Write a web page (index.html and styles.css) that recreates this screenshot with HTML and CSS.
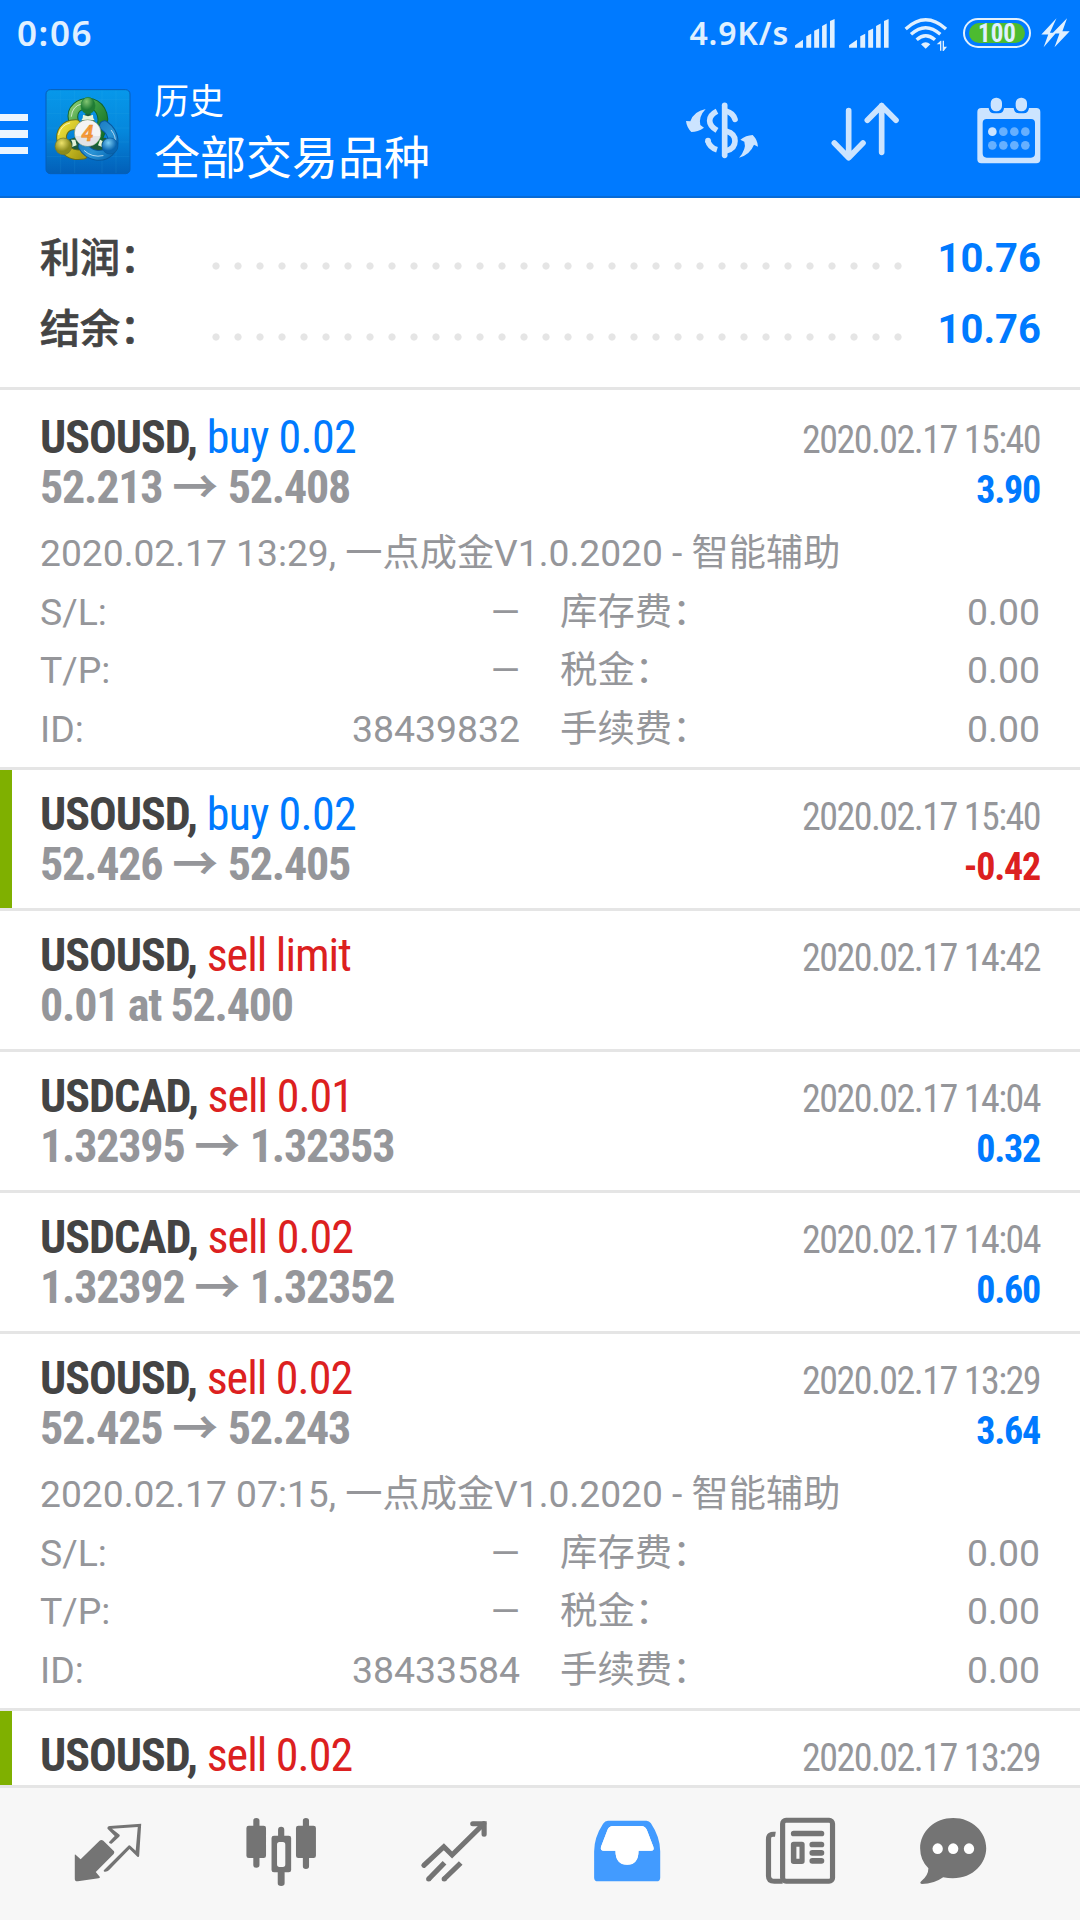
FILE: index.html
```html
<!DOCTYPE html>
<html lang="zh-CN">
<head>
<meta charset="utf-8">
<title>历史</title>
<link rel="stylesheet" href="styles.css">
</head>
<body>
<div class="screen">
  <header class="header">
    <div class="status">
      <span class="clock">0:06</span>
      <span class="speed">4.9K/s</span>
      <svg class="signal" viewBox="405 54 121 88"><path d="M405 141V134L429 117V141ZM439 141V106L454 99V141ZM463 141V90L478 83V141ZM487 141V75L501 68V141ZM511 141V60L525 54V141Z"/></svg>
      <svg class="signal signal-2" viewBox="405 54 121 88"><path d="M405 141V134L429 117V141ZM439 141V106L454 99V141ZM463 141V90L478 83V141ZM487 141V75L501 68V141ZM511 141V60L525 54V141Z"/></svg>
      <svg class="wifi" viewBox="733 51 132 105"><g fill="none" stroke="#e0f0ff" stroke-width="10"><path d="M738 87Q798 32 859 87"/><path d="M754 103Q798 63 842 103"/><path d="M771 119Q798 95 826 119"/></g><path d="M784 133Q798 120 812 133L798 146ZM841 152V133H831L843 122H845V152ZM849 122H853V140H862L852 153H849Z"/></svg>
      <div class="battery"><div class="battery-fill">100</div></div>
      <svg class="bolt" viewBox="1143 54 88 91"><path d="M1190 55L1144 104H1165L1151 143L1189 99H1170ZM1222 55L1177 101H1199L1184 143L1230 94H1208Z"/></svg>
    </div>
    <div class="appbar">
      <div class="menu"><i></i><i></i><i></i></div>
      <svg class="logo" viewBox="132 262 264 264">
        <defs>
          <linearGradient id="sky" x1="0" y1="0" x2="0" y2="1"><stop offset="0" stop-color="#0798ea"/><stop offset=".5" stop-color="#0587dc"/><stop offset="1" stop-color="#025fb8"/></linearGradient>
          <linearGradient id="green" x1="0" y1="0" x2="1" y2="1"><stop offset="0" stop-color="#8ccb72"/><stop offset=".4" stop-color="#3b9b42"/><stop offset="1" stop-color="#126d26"/></linearGradient>
          <linearGradient id="gold" x1="0" y1="0" x2="1" y2="1"><stop offset="0" stop-color="#eedf38"/><stop offset="1" stop-color="#a69b13"/></linearGradient>
          <linearGradient id="azure" x1="0" y1="0" x2="1" y2="1"><stop offset="0" stop-color="#1671b8"/><stop offset=".6" stop-color="#2a93d5"/><stop offset="1" stop-color="#076ab5"/></linearGradient>
          <radialGradient id="greenBall" cx=".4" cy=".25"><stop offset="0" stop-color="#83c673"/><stop offset="1" stop-color="#207c35"/></radialGradient>
          <radialGradient id="goldBall" cx=".4" cy=".3"><stop offset="0" stop-color="#eee36c"/><stop offset="1" stop-color="#8c8b1d"/></radialGradient>
          <radialGradient id="blueBall" cx=".4" cy=".3"><stop offset="0" stop-color="#7bcef5"/><stop offset="1" stop-color="#0965b0"/></radialGradient>
        </defs>
        <rect x="138" y="270" width="252" height="252" rx="13" fill="url(#sky)" stroke="#075eb5" stroke-width="3"/>
        <path d="M182 272V520M224 272V520M306 272V520M348 272V520M140 300H388M140 342H388M140 385H388M140 427H388M140 470H388" stroke="#48b8f2" stroke-opacity=".18" stroke-width="2"/>
        <path d="M264 330L305 400H223ZM205 420L262 400V462H220ZM262 410L320 415L310 460L262 445Z" fill="#1c5c3c"/>
        <g fill="none" stroke-linecap="round" stroke-linejoin="round">
          <path d="M220 362C212 326 242 311 264 311C294 311 320 343 303 388Q299 408 286 421" stroke="#12652c" stroke-width="32"/>
          <path d="M220 362C212 326 242 311 264 311C294 311 320 343 303 388Q299 408 286 421" stroke="url(#green)" stroke-width="26"/>
          <path d="M228 375C194 374 180 400 186 424C192 453 214 470 249 464" stroke="#666e1a" stroke-width="32"/>
          <path d="M228 375C194 374 180 400 186 424C192 453 214 470 249 464" stroke="url(#gold)" stroke-width="26"/>
          <path d="M313 378C345 401 346 438 327 456C305 476 266 468 250 440" stroke="#07589f" stroke-width="32"/>
          <path d="M313 378C345 401 346 438 327 456C305 476 266 468 250 440" stroke="url(#azure)" stroke-width="26"/>
          <path d="M214 350Q217 319 244 313M176 405Q182 376 209 370M253 453Q276 475 309 468M334 392Q350 412 345 430" stroke="#fff" stroke-opacity=".65" stroke-width="3"/>
        </g>
        <path d="M249 345Q250 354 244 362H284Q278 354 279 345L264 350ZM213 420Q220 430 216 442L230 437L226 420ZM300 420L308 424Q302 434 306 442L294 437Z" fill="#e4f2d8"/>
        <ellipse cx="264" cy="318" rx="21" ry="25" fill="url(#greenBall)" stroke="#187b34" stroke-width="2"/>
        <circle cx="190" cy="440" r="25" fill="url(#goldBall)" stroke="#75782b" stroke-width="2"/>
        <circle cx="330" cy="439" r="24" fill="url(#blueBall)" stroke="#07599d" stroke-width="2"/>
        <circle cx="263" cy="400" r="40" fill="#f4f4f4" stroke="#5b7f55" stroke-width="1.500"/><path d="M225 409A39 39 0 0 0 301 409Z" fill="#d9dadf" fill-opacity=".65"/>
        <text class="logo-digit" x="262" y="424" text-anchor="middle">4</text>
      </svg>
      <div class="titles"><div class="title">历史</div><div class="subtitle">全部交易品种</div></div>
      <div class="actions">
        <svg viewBox="66 285 240 210"><g fill="none" stroke-width="17"><path d="M194 316V466" stroke-linecap="round"/><path d="M171 334Q149 345 149 362Q149 378 171 391"/><path d="M143 421Q148 442 171 449" /><path d="M199 334Q219 339 225 358" stroke-linecap="round"/><path d="M199 394Q225 401 225 423Q225 446 199 452"/></g><circle cx="144" cy="422" r="8.500"/><path d="M137 327Q101 334 91 364L78 363Q80 382 94 396Q113 396 132 383L121 375Q115 350 137 327ZM237 473Q270 464 282 434L294 440Q293 420 278 405Q258 406 241 419L253 425Q260 447 237 473Z"/></svg>
        <svg viewBox="498 285 240 210"><path d="M566 332V472M523 429L566 473L609 429M665 457V317M622 361L665 317L708 361" fill="none" stroke-width="17" stroke-linecap="round" stroke-linejoin="round"/></svg>
        <svg viewBox="926 285 240 210"><path fill-rule="evenodd" d="M963 324H985Q987 340 1001 340H1015Q1030 340 1031 324H1060Q1062 340 1076 340H1090Q1104 340 1106 324H1128Q1140 324 1140 336V478Q1140 490 1128 490H963Q951 490 951 478V336Q951 324 963 324ZM979 357Q967 357 967 369V460Q967 473 979 473H1112Q1124 473 1124 460V369Q1124 357 1112 357Z"/><rect x="991" y="293" width="34" height="41" rx="16"/><rect x="1066" y="293" width="34" height="41" rx="16"/><circle cx="996" cy="395" r="13"/><g fill="#66b0ff"><circle cx="1029" cy="395" r="13"/><circle cx="1062" cy="395" r="13"/><circle cx="1095" cy="395" r="13"/><circle cx="996" cy="436" r="13"/><circle cx="1029" cy="436" r="13"/><circle cx="1062" cy="436" r="13"/><circle cx="1095" cy="436" r="13"/></g></svg>
      </div>
    </div>
  </header>

  <section class="summary">
    <div class="sum-row"><span class="sum-label">利润：</span><span class="dots"></span><span class="sum-value">10.76</span></div>
    <div class="sum-row"><span class="sum-label">结余：</span><span class="dots"></span><span class="sum-value">10.76</span></div>
  </section>

  <main class="deals">
    <article class="deal first">
      <div class="line"><span class="sym"><b>USOUSD,</b> <span class="buy">buy 0.02</span></span><span class="time">2020.02.17 15:40</span></div>
      <div class="line"><span class="price">52.213 <span class="arrow">→</span> 52.408</span><span class="profit buy">3.90</span></div>
      <div class="details">
        <div class="comment">2020.02.17 13:29, 一点成金V1.0.2020 - 智能辅助</div>
        <div class="pair"><span>S/L:</span><span class="dash">—</span></div><div class="pair"><span>库存费：</span><span>0.00</span></div>
        <div class="pair"><span>T/P:</span><span class="dash">—</span></div><div class="pair"><span>税金：</span><span>0.00</span></div>
        <div class="pair"><span>ID:</span><span>38439832</span></div><div class="pair"><span>手续费：</span><span>0.00</span></div>
      </div>
    </article>
    <article class="deal marked">
      <div class="line"><span class="sym"><b>USOUSD,</b> <span class="buy">buy 0.02</span></span><span class="time">2020.02.17 15:40</span></div>
      <div class="line"><span class="price">52.426 <span class="arrow">→</span> 52.405</span><span class="profit sell">-0.42</span></div>
    </article>
    <article class="deal">
      <div class="line"><span class="sym"><b>USOUSD,</b> <span class="sell">sell limit</span></span><span class="time">2020.02.17 14:42</span></div>
      <div class="line"><span class="price">0.01 at 52.400</span></div>
    </article>
    <article class="deal">
      <div class="line"><span class="sym"><b>USDCAD,</b> <span class="sell">sell 0.01</span></span><span class="time">2020.02.17 14:04</span></div>
      <div class="line"><span class="price">1.32395 <span class="arrow">→</span> 1.32353</span><span class="profit buy">0.32</span></div>
    </article>
    <article class="deal">
      <div class="line"><span class="sym"><b>USDCAD,</b> <span class="sell">sell 0.02</span></span><span class="time">2020.02.17 14:04</span></div>
      <div class="line"><span class="price">1.32392 <span class="arrow">→</span> 1.32352</span><span class="profit buy">0.60</span></div>
    </article>
    <article class="deal">
      <div class="line"><span class="sym"><b>USOUSD,</b> <span class="sell">sell 0.02</span></span><span class="time">2020.02.17 13:29</span></div>
      <div class="line"><span class="price">52.425 <span class="arrow">→</span> 52.243</span><span class="profit buy">3.64</span></div>
      <div class="details">
        <div class="comment">2020.02.17 07:15, 一点成金V1.0.2020 - 智能辅助</div>
        <div class="pair"><span>S/L:</span><span class="dash">—</span></div><div class="pair"><span>库存费：</span><span>0.00</span></div>
        <div class="pair"><span>T/P:</span><span class="dash">—</span></div><div class="pair"><span>税金：</span><span>0.00</span></div>
        <div class="pair"><span>ID:</span><span>38433584</span></div><div class="pair"><span>手续费：</span><span>0.00</span></div>
      </div>
    </article>
    <article class="deal marked">
      <div class="line"><span class="sym"><b>USOUSD,</b> <span class="sell">sell 0.02</span></span><span class="time">2020.02.17 13:29</span></div>
    </article>
  </main>

  <nav class="tabs">
    <svg viewBox="208 381 215 222" preserveAspectRatio="none"><path d="M219 494Q221 493 223 496L236 508L291 452Q296 448 302 452L333 484Q335 488 332 492L280 546L292 561Q293 564 288 565L228 574Q219 575 219 566Z"/><path fill-rule="evenodd" d="M412 401L406 498Q405 502 401 500L378 477L318 541Q313 546 305 545Q301 544 304 540L374 468Q377 464 381 468L396 482L402 411L327 416L349 434Q351 437 348 440L326 461Q320 462 318 457L335 438L314 416Q313 409 321 408Z"/></svg>
    <svg viewBox="708 381 215 222" preserveAspectRatio="none"><path fill-rule="evenodd" d="M735 392Q735 384 744 384Q753 384 753 392V407H765Q772 407 772 414V497Q772 504 765 504H753V525Q753 533 744 533Q735 533 735 525V504H722Q715 504 715 497V414Q715 407 722 407H735ZM807 419Q807 410 816 410Q825 410 825 419V437H838Q845 437 845 444V540Q845 547 838 547H826V580Q826 588 816 588Q806 588 806 580V547H795Q788 547 788 540V444Q788 437 795 437H807ZM811 456Q804 456 804 464V523Q804 531 811 531H821Q828 531 828 523V464Q828 456 821 456ZM879 392Q879 384 888 384Q897 384 897 392V407H910Q917 407 917 414V497Q917 504 910 504H897V529Q897 537 888 537Q879 537 879 529V504H866Q859 504 859 497V414Q859 407 866 407H879Z"/></svg>
    <svg viewBox="1211 381 215 222" preserveAspectRatio="none"><g class="outline" stroke-width="15"><path d="M1231 526L1289 470L1313 495L1405 401" stroke-linecap="round"/><path d="M1373 401H1406V433" stroke-linecap="round"/><path d="M1245 567L1291 518M1290 567L1338 519" /></g><circle cx="1245" cy="567" r="7.500"/><circle cx="1290" cy="567" r="7.500"/></svg>
    <svg class="active" viewBox="146 381 215 222" preserveAspectRatio="none"><path fill-rule="evenodd" d="M198 392H310Q318 392 323 400Q350 442 350 484V563Q350 574 339 574H169Q158 574 158 563V484Q158 442 184 401Q190 392 198 392ZM212 408Q202 408 197 419L178 470Q175 482 186 482H220Q220 524 254 524Q287 524 287 482H323Q334 482 330 470L311 419Q305 408 296 408Z"/><path fill="#fff" d="M212 408Q202 408 197 419L178 470Q175 482 186 482H220Q220 524 254 524Q287 524 287 482H323Q334 482 330 470L311 419Q305 408 296 408Z"/></svg>
    <svg viewBox="649 381 215 222" preserveAspectRatio="none"><g class="outline" stroke-width="15"><rect x="706" y="391" width="145" height="183" rx="10"/><path d="M685 433Q665 430 665 447V558Q665 574 682 574H706"/></g><rect x="730" y="422" width="97" height="17" rx="8"/><path fill-rule="evenodd" d="M738 455H762Q770 455 770 463V514Q770 522 762 522H738Q730 522 730 514V463Q730 455 738 455ZM746 470V506H755V470Z"/><rect x="784" y="455" width="43" height="17" rx="8"/><rect x="784" y="480" width="43" height="17" rx="8"/><rect x="784" y="504" width="43" height="17" rx="8"/></svg>
    <svg viewBox="1091 381 215 222" preserveAspectRatio="none"><path d="M1199 384C1254 384 1295 425 1295 475C1295 526 1247 578 1170 562Q1143 582 1108 582Q1100 580 1106 574Q1127 557 1127 535Q1103 511 1103 475C1103 424 1146 384 1199 384Z"/><g fill="#fff"><ellipse cx="1154" cy="476" rx="15" ry="16"/><ellipse cx="1199" cy="476" rx="15" ry="16"/><ellipse cx="1245" cy="476" rx="15" ry="16"/></g></svg>
  </nav>
</div>
</body>
</html>
```
FILE: styles.css
```css
* { box-sizing: border-box; }
body { margin: 0; font-family: Roboto, "Noto Sans CJK SC", sans-serif; }
.screen { width: 1080px; height: 1920px; display: flex; flex-direction: column; background: #fff; overflow: hidden; }

.header { height: 198px; flex: none; background: #007aff; border-bottom: 2px solid #086bd6; color: #fff; }
.status { height: 66px; padding: 0 10px 0 17px; display: flex; align-items: center; color: #e0f0ff; fill: #e0f0ff; font-family: "Noto Sans", sans-serif; font-weight: 600; }
.clock { font-size: 35px; line-height: 66px; letter-spacing: 1.6px; }
.speed { margin-left: auto; font-size: 32px; line-height: 66px; letter-spacing: .8px; }
.signal { width: 40px; height: 29px; margin-left: 6px; }
.signal-2 { margin-left: 14px; }
.wifi { width: 44px; height: 35px; margin: 3px 0 0 15px; }
.battery { width: 68px; height: 30px; margin-left: 15px; padding: 3px 4px; border: 2px solid #e0f0ff; border-radius: 15px; }
.battery-fill { height: 20px; border-radius: 10px; background: #4cbb30; font-family: Roboto, sans-serif; font-size: 25px; line-height: 21px; font-weight: 700; text-align: center; font-stretch: 80%; }
.bolt { width: 29px; height: 30px; margin-left: 10px; }

.appbar { height: 130px; display: flex; align-items: center; padding-right: 31px; }
.menu { width: 28px; display: flex; flex-direction: column; gap: 9px; margin-top: 6px; }
.menu i { height: 7.500px; background: #ebf5ff; }
.logo { width: 88px; height: 88px; margin: 0 0 0 16px; }
.logo-digit { font: italic 700 66px Roboto, sans-serif; fill: #f79a38; stroke: #dd8527; stroke-width: 1; }
.titles { margin-left: 22px; height: 130px; padding-top: 11px; }
.title { font-size: 35px; line-height: 52px; }
.subtitle { font-size: 46px; line-height: 58px; }
.actions { margin-left: auto; display: flex; gap: 63.500px; fill: #cce4ff; stroke: none; }
.actions svg { width: 80px; height: 70px; margin-top: -3px; }
.actions path[stroke-width], .actions g[stroke-width] { stroke: #cce4ff; }

.summary { height: 192px; flex: none; padding: 25px 40px 0; border-bottom: 3px solid #e5e5e5; font-size: 40px; font-weight: 500; color: #444; }
.sum-row { height: 71px; line-height: 71px; display: flex; align-items: center; }
.sum-label { width: 165px; -webkit-text-stroke: .7px #444; }
.dots { width: 704px; height: 8px; margin-top: 14px; background: radial-gradient(circle at 11px 4px, #e5e5e5 3.200px, transparent 4px) 0 0 / 22px 8px repeat-x; }
.sum-value { margin: 0 -1px 0 auto; color: #007aff; font-weight: 700; }

.deals { flex: 1; min-height: 0; overflow: hidden; }
.deal { padding: 19px 40px 0; min-height: 141px; border-bottom: 3px solid #e5e5e5; color: #95969a; }
.first { padding-top: 22px; }
.marked { box-shadow: inset 12px 0 #7fb000; }
.line { height: 50px; line-height: 50px; display: flex; justify-content: space-between; font-family: "Roboto Condensed", Roboto, "Noto Sans CJK SC", sans-serif; font-stretch: 75%; white-space: nowrap; }
.sym { font-size: 46px; letter-spacing: -1px; }
.sym b { color: #444; font-weight: 700; letter-spacing: -1.050px; }
.sym .buy { letter-spacing: -.7px; }
.price { font-size: 46px; font-weight: 700; letter-spacing: -1.200px; }
.arrow { margin: 0 0 0 .5px; letter-spacing: 0; }
.time { font-size: 38px; padding-top: 3px; letter-spacing: -1.550px; }
.profit { font-size: 38px; font-weight: 700; padding-top: 3px; letter-spacing: -1.200px; }
.buy { color: #007aff; }
.sell { color: #dc2020; }
.details { height: 255px; padding-top: 12px; display: grid; grid-template-columns: 480px 480px; column-gap: 40px; grid-auto-rows: 58.500px; font-size: 37.400px; line-height: 58px; }
.comment { grid-column: 1 / 3; white-space: nowrap; font-size: 37.210px; line-height: 59px; }
.pair { display: flex; justify-content: space-between; }

.tabs { height: 135px; flex: none; border-top: 3px solid #e5e5e5; background: #f7f7f7; padding-left: 21px; display: grid; grid-template-columns: repeat(5, 173.200px) 133px; place-items: center; fill: #747474; }
.tabs svg { width: 74px; height: 74px; }
.tabs .active { fill: #429bff; }
.outline { fill: none; stroke: #747474; }
```
